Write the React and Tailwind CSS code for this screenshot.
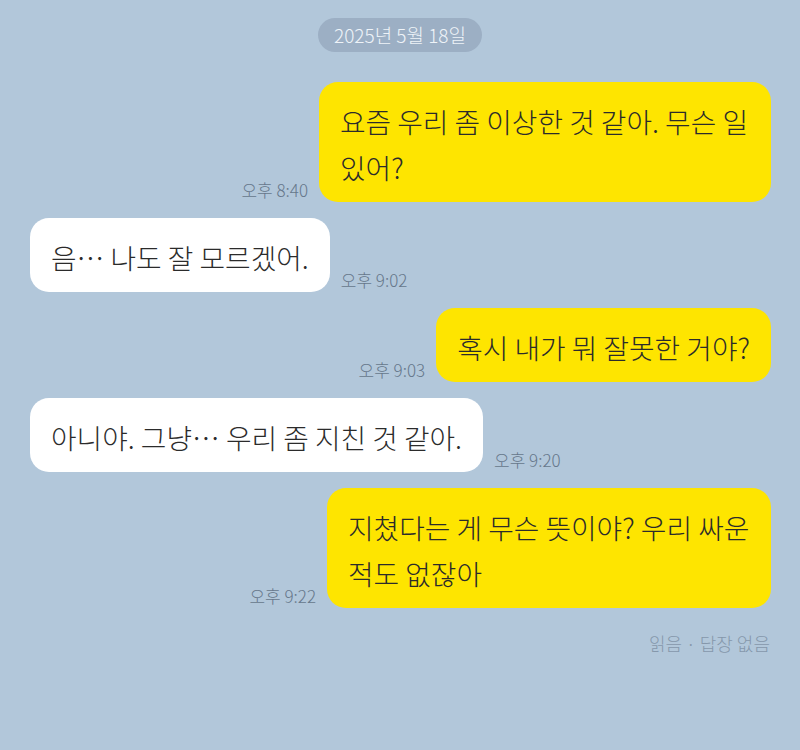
import React from 'react';

const messages = [
  { id: 1, mine: true, text: '요즘 우리 좀 이상한 것 같아. 무슨 일 있어?', time: '오후 8:40', maxW: 'max-w-[452px]' },
  { id: 2, mine: false, text: '음… 나도 잘 모르겠어.', time: '오후 9:02', maxW: 'max-w-[460px]' },
  { id: 3, mine: true, text: '혹시 내가 뭐 잘못한 거야?', time: '오후 9:03', maxW: 'max-w-[460px]' },
  { id: 4, mine: false, text: '아니야. 그냥… 우리 좀 지친 것 같아.', time: '오후 9:20', maxW: 'max-w-[460px]' },
  { id: 5, mine: true, text: '지쳤다는 게 무슨 뜻이야? 우리 싸운 적도 없잖아', time: '오후 9:22', maxW: 'max-w-[444px]' },
];

const Bubble = ({ message }) => {
  const time = (
    <span className="shrink-0 pb-[1px] text-[17px] leading-[22px] text-[#66778b] whitespace-nowrap">
      {message.time}
    </span>
  );
  return (
    <div className={`flex items-end gap-[11px] ${message.mine ? 'justify-end' : 'justify-start'}`}>
      {message.mine && time}
      <div
        className={`${message.maxW} rounded-[19px] px-[21px] pt-[16px] pb-[12px] text-[27.8px] leading-[46px] text-[#2b2b2b] ${
          message.mine ? 'bg-[#fee500]' : 'bg-white'
        }`}
      >
        {message.text}
      </div>
      {!message.mine && time}
    </div>
  );
};

const App = () => {
  return (
    <div
      className="w-[800px] h-[750px] bg-[#b2c7da] font-extralight"
      style={{ fontFamily: '"Noto Sans CJK KR", "Noto Sans", sans-serif' }}
    >
      <div className="flex justify-center pt-[18px]">
        <span className="rounded-full bg-[#9cafc4] px-[16px] h-[34px] flex items-center text-[19px] text-[#eef3f8]">
          2025년 5월 18일
        </span>
      </div>
      <div className="flex flex-col gap-[16px] pl-[30px] pr-[29px] pt-[30px]">
        {messages.map((m) => (
          <Bubble key={m.id} message={m} />
        ))}
      </div>
      <div className="flex justify-end pr-[30px] pt-[22px] text-[18px] text-[#8597ab]">
        읽음 · 답장 없음
      </div>
    </div>
  );
};

export default App;
